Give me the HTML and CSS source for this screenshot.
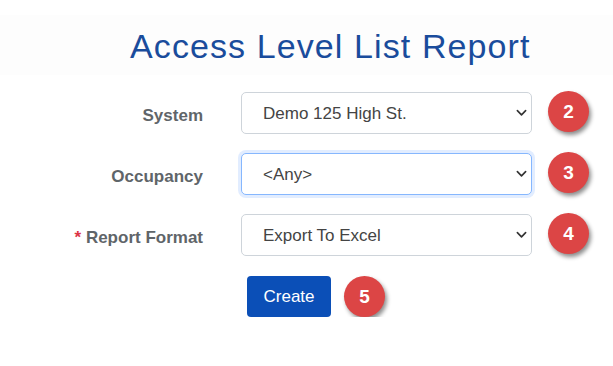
FILE: index.html
```html
<!DOCTYPE html>
<html lang="en">
<head>
    <meta charset="UTF-8">
    <meta name="viewport" content="width=device-width, initial-scale=1.0">
    <title>Access Level List Report</title>
    <link rel="stylesheet" href="styles.css">
</head>
<body>

    <div class="header">
        <h1>Access Level List Report</h1>
    </div>

    <form class="report-form">
        <label class="field-label" for="system">System</label>
        <div class="select-wrap">
            <select id="system" class="select-field">
                <option>Demo 125 High St.</option>
            </select>
            <svg class="chevron" viewBox="0 0 12 8"><path d="M1.5 1.5 L6 6 L10.5 1.5"/></svg>
        </div>
        <span class="step">2</span>

        <label class="field-label" for="occupancy">Occupancy</label>
        <div class="select-wrap">
            <select id="occupancy" class="select-field focused">
                <option>&lt;Any&gt;</option>
            </select>
            <svg class="chevron" viewBox="0 0 12 8"><path d="M1.5 1.5 L6 6 L10.5 1.5"/></svg>
        </div>
        <span class="step">3</span>

        <label class="field-label" for="format"><span class="required">*</span> Report Format</label>
        <div class="select-wrap">
            <select id="format" class="select-field">
                <option>Export To Excel</option>
            </select>
            <svg class="chevron" viewBox="0 0 12 8"><path d="M1.5 1.5 L6 6 L10.5 1.5"/></svg>
        </div>
        <span class="step">4</span>

        <div class="actions">
            <button type="button" class="create-btn">Create</button>
            <span class="step">5</span>
        </div>
    </form>

</body>
</html>
```

FILE: styles.css
```css
/* General styles */
body {
    font-family: "Liberation Sans", Arial, sans-serif;
    background-color: #fff;
    margin: 0;
    padding: 0;
}

.header {
    background-color: #fdfdfd;
    margin-top: 15px;
    height: 60px;
    padding-left: 130px;
}

h1 {
    margin: 0;
    padding-top: 12px;
    font-size: 34px;
    font-weight: normal;
    letter-spacing: 1.1px;
    white-space: nowrap;
    color: #1a4c9c;
}

.report-form {
    display: grid;
    grid-template-columns: 203px 291px 40px;
    column-gap: 38px;
    row-gap: 19px;
    align-items: center;
    margin-top: 17px;
}

.report-form .step {
    margin-left: -22px;
    margin-top: -3px;
}

.field-label {
    padding-top: 5px;
    text-align: right;
    font-size: 17px;
    font-weight: bold;
    color: #5f6569;
}

.required {
    color: #dc3545;
}

.select-wrap {
    position: relative;
}

.select-field {
    appearance: none;
    -webkit-appearance: none;
    width: 100%;
    height: 42px;
    padding: 0 30px 0 21px;
    border: 1px solid #ced4da;
    border-radius: 5px;
    background-color: #fff;
    font-family: "Liberation Sans", Arial, sans-serif;
    font-size: 17px;
    color: #444;
    outline: none;
}

.select-field.focused {
    border-color: #86b7fe;
    box-shadow: 0 0 0 3px rgba(13, 110, 253, 0.12);
}

.chevron {
    position: absolute;
    right: 5px;
    top: 17px;
    width: 11px;
    height: 8px;
    fill: none;
    stroke: #333;
    stroke-width: 1.8;
    stroke-linecap: round;
    stroke-linejoin: round;
}

.step {
    display: flex;
    justify-content: center;
    align-items: center;
    width: 41px;
    height: 41px;
    border-radius: 50%;
    background-color: #dc4545;
    color: #fff;
    font-size: 19px;
    font-weight: bold;
    box-shadow: 2px 3px 4px rgba(0, 0, 0, 0.45);
}

.actions {
    grid-column: 2 / 4;
    display: flex;
    align-items: center;
    gap: 13px;
    margin-left: 6px;
    margin-top: 1px;
}

.actions .step {
    margin-left: 0;
    margin-top: 0;
}

.create-btn {
    width: 84px;
    height: 41px;
    background-color: #0b4fb7;
    color: #fff;
    border: none;
    border-radius: 4px;
    font-family: "Liberation Sans", Arial, sans-serif;
    font-size: 17px;
    cursor: pointer;
}
```
